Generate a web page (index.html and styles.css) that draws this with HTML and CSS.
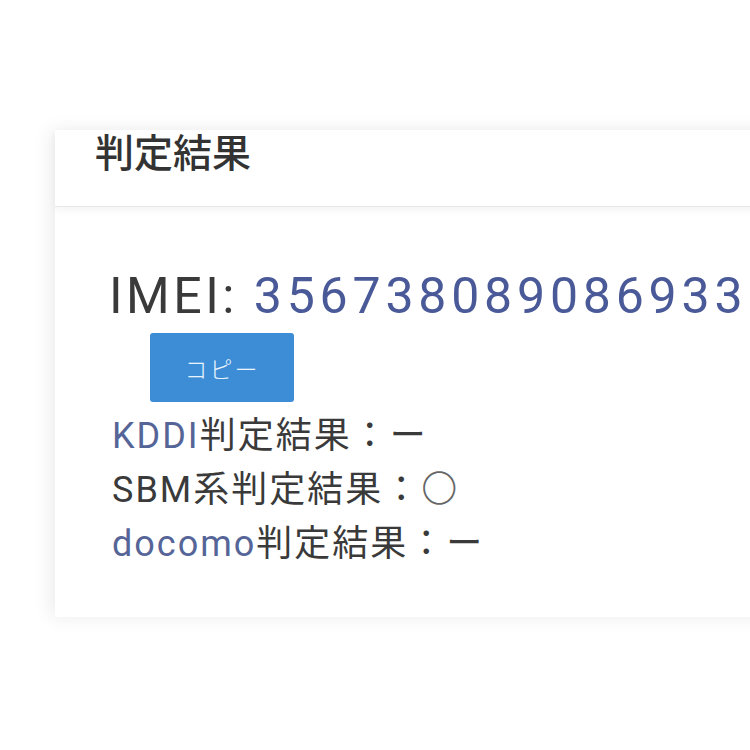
FILE: index.html
```html
<!DOCTYPE html>
<html lang="ja">
<head>
<meta charset="utf-8">
<link rel="stylesheet" href="styles.css">
</head>
<body>
<div class="page">
  <div class="card">
    <div class="card-header">判定結果</div>
    <div class="card-body">
      <div class="imei"><span class="label">IMEI: </span><span class="num">356738089086933</span></div>
      <button class="copy">コピー</button>
      <div class="results">
        <div class="row"><span class="carrier">KDDI</span>判定結果：ー</div>
        <div class="row">SBM系判定結果：<span class="mark">〇</span></div>
        <div class="row"><span class="carrier">docomo</span>判定結果：ー</div>
      </div>
    </div>
  </div>
</div>
</body>
</html>
```

FILE: styles.css
```css
html, body {
  margin: 0;
  padding: 0;
  background: #ffffff;
  overflow: hidden;
  width: 750px;
  height: 750px;
}
.page {
  padding-top: 130px;
  padding-left: 55px;
  width: 900px;
}
.card {
  background: #ffffff;
  width: 820px;
  box-shadow: -4px 0 18px rgba(0, 0, 0, 0.08);
}
.card-header {
  height: 77px;
  box-sizing: border-box;
  padding-left: 40px;
  line-height: 40px;
  font-family: "Noto Sans CJK JP", sans-serif;
  font-size: 39px;
  font-weight: 500;
  color: #333333;
  border-bottom: 1px solid #e8e8e8;
  box-shadow: 0 3px 8px rgba(0, 0, 0, 0.05);
  position: relative;
}
.card-body {
  padding: 59px 0 46px 54px;
}
.imei {
  font-family: Roboto, "Noto Sans CJK JP", sans-serif;
  font-size: 50px;
  line-height: 60px;
  letter-spacing: 4.8px;
  white-space: nowrap;
}
.label { color: #3a3a3a; letter-spacing: 3.5px; }
.num { color: #4a5a98; }
.copy {
  display: block;
  margin: 7px 0 0 41px;
  width: 144px;
  height: 69px;
  border: none;
  border-radius: 3px;
  background: #3d8dd6;
  color: #eaf4ff;
  font-family: "Noto Sans CJK JP", sans-serif;
  font-size: 23px;
  font-weight: 300;
  letter-spacing: 2px;
  padding: 0;
}
.results {
  margin-top: 7px;
  margin-left: 3px;
}
.row {
  font-family: Roboto, "Noto Sans CJK JP", sans-serif;
  font-size: 36px;
  line-height: 54px;
  letter-spacing: 2px;
  color: #3a3a3a;
  white-space: nowrap;
}
.carrier { color: #566597; }
.mark { color: #666666; font-weight: 300; }
```
